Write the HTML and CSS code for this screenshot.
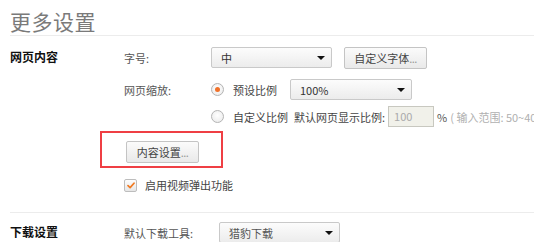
FILE: index.html
```html
<!DOCTYPE html>
<html lang="zh-CN">
<head>
<meta charset="utf-8">
<link rel="stylesheet" href="styles.css">
</head>
<body>
<div class="page">
  <h1 class="title">更多设置</h1>
  <section class="section section-content">
    <div class="sec-label">网页内容</div>
    <div class="sec-body">
      <div class="row row-font">
        <span class="field-label">字号:</span>
        <div class="select select-font"><span>中</span><i class="arrow"></i></div>
        <button class="btn btn-font">自定义字体<span class="dots">...</span></button>
      </div>
      <div class="row row-zoom">
        <span class="field-label">网页缩放:</span>
        <span class="radio checked"></span>
        <span class="opt-text">预设比例</span>
        <div class="select select-zoom"><span>100%</span><i class="arrow"></i></div>
      </div>
      <div class="row row-custom">
        <span class="field-label"></span>
        <span class="radio"></span>
        <span class="opt-text">自定义比例</span>
        <span class="opt-text default-label">默认网页显示比例:</span>
        <div class="input-box">100</div>
        <span class="pct">%</span>
        <span class="hint">( 输入范围: 50~400 )</span>
      </div>
      <div class="highlight">
        <button class="btn btn-content">内容设置<span class="dots">...</span></button>
      </div>
      <div class="row row-check">
        <span class="checkbox">
          <svg width="8" height="7" viewBox="0 0 8 7"><path d="M1 3.6 L3.1 5.6 L7 1.2" fill="none" stroke="#f07a22" stroke-width="1.7" stroke-linecap="round" stroke-linejoin="round"/></svg>
        </span>
        <span class="check-text">启用视频弹出功能</span>
      </div>
    </div>
  </section>
  <section class="section section-download">
    <div class="sec-label">下载设置</div>
    <div class="sec-body">
      <div class="row row-dl">
        <span class="field-label dl-label">默认下载工具:</span>
        <div class="select select-dl"><span>猎豹下载</span><i class="arrow"></i></div>
      </div>
    </div>
  </section>
</div>
</body>
</html>
```

FILE: styles.css
```css
html, body {
  margin: 0;
  padding: 0;
  background: #fff;
  overflow: hidden;
}
body {
  font-family: "Noto Sans CJK SC", "Liberation Sans", sans-serif;
  font-size: 11px;
  color: #444;
}
.page {
  width: 534px;
  height: 242px;
  padding-left: 10px;
  box-sizing: border-box;
  overflow: hidden;
}
.title {
  margin: 0;
  padding-top: 8px;
  height: 27px;
  line-height: 27px;
  font-size: 21px;
  font-weight: normal;
  color: #7a7a7a;
  letter-spacing: 0.5px;
  border-bottom: 1px solid #ececec;
}
.section {
  display: flex;
}
.section-content {
  padding-top: 11px;
  height: 177px;
  box-sizing: border-box;
  border-bottom: 1px solid #ececec;
}
.section-download {
  padding-top: 9px;
}
.sec-label {
  width: 114px;
  flex: none;
  line-height: 19px;
  font-weight: bold;
  color: #111;
  font-size: 12px;
}
.sec-body {
  display: flex;
  flex-direction: column;
  min-width: 0;
}
.row {
  display: flex;
  align-items: center;
  height: 21px;
  white-space: nowrap;
}
.row > * { flex: none; }
.row-zoom { margin-top: 11px; }
.row-custom { margin-top: 6px; }
.field-label {
  width: 87px;
  color: #555;
}
.dl-label { width: 95px; }
.select {
  box-sizing: border-box;
  height: 21px;
  border: 1px solid #c9c9c9;
  border-radius: 2px;
  background: linear-gradient(#fcfcfc, #ececec);
  display: flex;
  align-items: center;
  justify-content: space-between;
  padding: 0 6px 0 9px;
  color: #333;
}
.select-font { width: 121px; }
.select-zoom { width: 122px; margin-left: 13px; }
.select-dl { width: 121px; color: #555; }
.arrow {
  width: 0;
  height: 0;
  border-left: 4px solid transparent;
  border-right: 4px solid transparent;
  border-top: 4px solid #111;
  margin-top: 1px;
}
.btn {
  box-sizing: border-box;
  height: 22px;
  border: 1px solid #c4c4c4;
  border-radius: 2px;
  background: linear-gradient(#fbfbfb, #e9e9e9);
  font-family: inherit;
  font-size: 11px;
  color: #444;
  padding: 0;
  line-height: 20px;
  white-space: nowrap;
  text-align: center;
}
.dots { color: #999; letter-spacing: -0.5px; }
.btn-font { margin-left: 12px; width: 83px; }
.radio {
  box-sizing: border-box;
  width: 13px;
  height: 13px;
  border-radius: 50%;
  border: 1px solid #b4b4b4;
  background: radial-gradient(circle at 50% 40%, #fff, #e8e8e8);
  display: flex;
  align-items: center;
  justify-content: center;
}
.radio.checked::after {
  content: "";
  width: 5px;
  height: 5px;
  border-radius: 50%;
  background: #f0712a;
}
.opt-text {
  margin-left: 9px;
  color: #444;
}
.default-label { margin-left: 6px; }
.input-box {
  box-sizing: border-box;
  width: 46px;
  height: 21px;
  margin-left: 3px;
  border: 1px solid #c8c8c0;
  background: #f1f1ea;
  color: #aaa;
  padding-left: 5px;
  line-height: 19px;
}
.pct { margin-left: 3px; color: #555; }
.hint { margin-left: 3px; color: #b0b0b0; }
.highlight {
  box-sizing: border-box;
  margin-top: 4px;
  margin-left: -24px;
  width: 123px;
  height: 37px;
  border: 2px solid #ef3f44;
  padding: 8px 0 0 24px;
}
.btn-content { width: 73px; }
.row-check {
  margin-top: 10px;
  height: 14px;
}
.checkbox {
  box-sizing: border-box;
  width: 13px;
  height: 13px;
  border: 1px solid #bdbdbd;
  border-radius: 2px;
  background: linear-gradient(#fdfdfd, #e6e6e6);
  display: flex;
  align-items: center;
  justify-content: center;
}
.check-text {
  margin-left: 8px;
  color: #444;
}
```
